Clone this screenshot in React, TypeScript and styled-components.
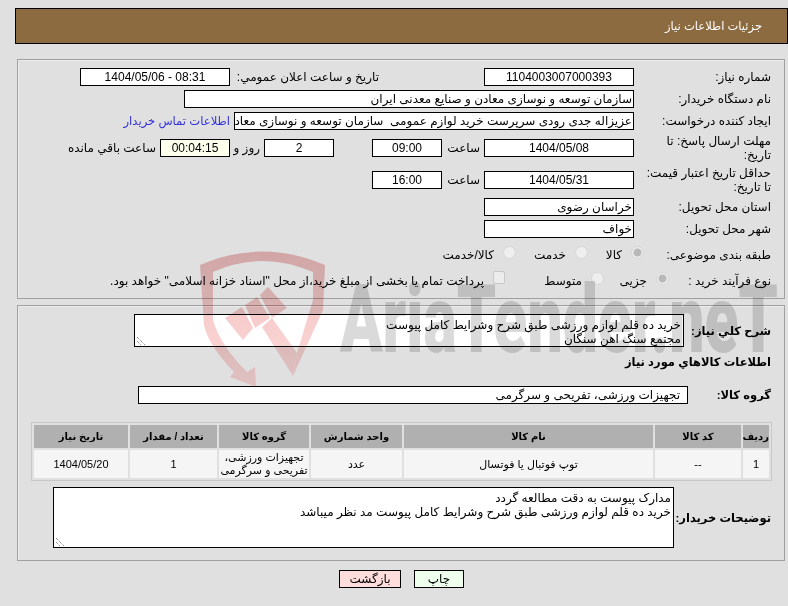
import styled, { createGlobalStyle } from 'styled-components';

const GlobalStyle = createGlobalStyle`
  html, body {
    margin: 0;
    padding: 0;
    background: #e0e0e0;
  }
  body {
    font-family: "Liberation Sans", "DejaVu Sans", sans-serif;
    font-size: 12px;
    color: #000;
  }
`;

const items = [
  ['1', '--', 'توپ فوتبال یا فوتسال', 'عدد', 'تجهیزات ورزشی، تفریحی و سرگرمی', '1', '1404/05/20'],
];

function ResizeGrip() {
  return (
    <Grip viewBox="0 0 9 9">
      <path d="M1 0 L9 8 M1 4 L5 8" stroke="#666" strokeDasharray="1 1" fill="none" />
    </Grip>
  );
}

export default function App() {
  return (
    <Page dir="rtl">
      <GlobalStyle />
      <Header>جزئیات اطلاعات نیاز</Header>

      <Panel>
        <Row>
          <Label>شماره نیاز:</Label>
          <Field $w={150} $center>1104003007000393</Field>
          <SubLabel>تاریخ و ساعت اعلان عمومي:</SubLabel>
          <Field $w={150} $center dir="ltr">1404/05/06 - 08:31</Field>
        </Row>
        <Row>
          <Label>نام دستگاه خریدار:</Label>
          <Field $w={450}>سازمان توسعه و نوسازی معادن و صنایع معدنی ایران</Field>
        </Row>
        <Row>
          <Label>ایجاد کننده درخواست:</Label>
          <Field $w={400}>عزیزاله جدی رودی سرپرست خرید لوازم عمومی  سازمان توسعه و نوسازی معادن و صنایع معدنی ایران</Field>
          <ContactLink>اطلاعات تماس خریدار</ContactLink>
        </Row>
        <TallRow>
          <Label>مهلت ارسال پاسخ: تا تاریخ:</Label>
          <Field $w={150} $center>1404/05/08</Field>
          <Unit $w={42}>ساعت</Unit>
          <Field $w={70} $center>09:00</Field>
          <Unit $w={38} />
          <Field $w={70} $center>2</Field>
          <Unit $w={34}>روز و</Unit>
          <Field $w={70} $center $bg="#ffffee">00:04:15</Field>
          <Unit>ساعت باقي مانده</Unit>
        </TallRow>
        <TallRow>
          <Label>حداقل تاریخ اعتبار قیمت: تا تاریخ:</Label>
          <Field $w={150} $center>1404/05/31</Field>
          <Unit $w={42}>ساعت</Unit>
          <Field $w={70} $center>16:00</Field>
        </TallRow>
        <Row>
          <Label>استان محل تحویل:</Label>
          <Field $w={150}>خراسان رضوی</Field>
        </Row>
        <Row>
          <Label>شهر محل تحویل:</Label>
          <Field $w={150}>خواف</Field>
        </Row>
        <ChoiceRow>
          <ChoiceLabel $w={127}>طبقه بندی موضوعی:</ChoiceLabel>
          <Radio $checked />
          <ChoiceText $w={34}>کالا</ChoiceText>
          <Radio />
          <ChoiceText $w={50}>خدمت</ChoiceText>
          <Radio />
          <ChoiceText>کالا/خدمت</ChoiceText>
        </ChoiceRow>
        <ProcessRow>
          <ChoiceLabel $w={102}>نوع فرآیند خرید :</ChoiceLabel>
          <Radio $checked />
          <ChoiceText $w={43}>جزیی</ChoiceText>
          <Radio />
          <ChoiceText $w={77}>متوسط</ChoiceText>
          <CheckBox />
          <ChoiceText>پرداخت تمام یا بخشی از مبلغ خرید،از محل "اسناد خزانه اسلامی" خواهد بود.</ChoiceText>
        </ProcessRow>
      </Panel>

      <Panel>
        <AreaRow>
          <BoldLabel $w={87}>شرح كلي نياز:</BoldLabel>
          <TextBox $w={550} $h={33}>
            خرید ده قلم لوازم ورزشی طبق شرح وشرایط کامل پیوست
            <br />
            مجتمع سنگ اهن سنگان
            <ResizeGrip />
          </TextBox>
        </AreaRow>
        <SectionTitle>اطلاعات كالاهاي مورد نياز</SectionTitle>
        <GroupRow>
          <BoldLabel $w={83}>گروه کالا:</BoldLabel>
          <Field $w={550} $pad={7}>تجهیزات ورزشی، تفریحی و سرگرمی</Field>
        </GroupRow>
        <ItemsTable>
          <colgroup>
            <col width={26} />
            <col width={86} />
            <col width={249} />
            <col width={91} />
            <col width={90} />
            <col width={87} />
            <col width={94} />
          </colgroup>
          <thead>
            <tr>
              <th>ردیف</th>
              <th>کد کالا</th>
              <th>نام کالا</th>
              <th>واحد شمارش</th>
              <th>گروه کالا</th>
              <th>تعداد / مقدار</th>
              <th>تاریخ نیاز</th>
            </tr>
          </thead>
          <tbody>
            {items.map((row) => (
              <tr key={row[0]}>
                {row.map((cell, i) => (
                  <td key={i}>{cell}</td>
                ))}
              </tr>
            ))}
          </tbody>
        </ItemsTable>
        <NotesRow>
          <BoldLabel $w={97}>توضیحات خریدار:</BoldLabel>
          <TextBox $w={621} $h={61}>
            مدارک پیوست به دقت مطالعه گردد
            <br />
            خرید ده قلم لوازم ورزشی طبق شرح وشرایط کامل پیوست مد نظر میباشد
            <ResizeGrip />
          </TextBox>
        </NotesRow>
      </Panel>

      <Buttons>
        <ActionButton $bg="#eeffee" $w={50}>چاپ</ActionButton>
        <ActionButton $bg="#ffdddd" $w={62}>بازگشت</ActionButton>
      </Buttons>

      <Watermark viewBox="0 0 788 606" aria-hidden="true">
        <defs>
          <linearGradient id="shieldFade" gradientUnits="userSpaceOnUse" x1="0" y1="250" x2="0" y2="386">
            <stop offset="0" stopColor="#eebcbc" />
            <stop offset="1" stopColor="#ffdcdc" />
          </linearGradient>
        </defs>
        <path
          d="M200 265 Q262 238 325 265 L323 310 L293 376 L297 353 L313 300 L313 272 Q262 250 213 272 L213 320 Q220 345 247 372 L255 367 L256 387 L230 377 L234 372 Q208 345 204 325 Z"
          fill="url(#shieldFade)"
        />
        <path d="M225 318 L242 307 L253 328 L243 340 Z" fill="url(#shieldFade)" />
        <path d="M245 305 L257 297 L270 318 L255 328 Z" fill="url(#shieldFade)" />
        <path d="M260 295 L268 287 L287 308 L272 318 Z" fill="url(#shieldFade)" />
        <path d="M272 318 L297 353 L293 376 L262 327 Z" fill="url(#shieldFade)" />
        <WatermarkText x="340" y="352" textLength="438" lengthAdjust="spacingAndGlyphs">
          AriaTender.neT
        </WatermarkText>
      </Watermark>
    </Page>
  );
}

const Page = styled.div`
  position: relative;
  width: 788px;
  height: 606px;
  overflow: hidden;
  padding-top: 8px;
  box-sizing: border-box;
`;

const Header = styled.div`
  box-sizing: border-box;
  height: 36px;
  margin-left: 15px;
  padding: 0 25px;
  display: flex;
  align-items: center;
  background: #8b6b3f;
  border: 1px solid #000;
  color: #fff;
  font-size: 11.5px;
`;

const Panel = styled.section`
  box-sizing: border-box;
  margin: 15px 3px 0 17px;
  padding: 8px 13px 6px 0;
  border: 1px solid #a0a0a0;
  box-shadow: inset 1px 1px 0 #ececec;
  & + & {
    margin-top: 6px;
    padding-bottom: 12px;
  }
`;

const Row = styled.div`
  display: flex;
  align-items: center;
  height: 18px;
  margin-bottom: 4px;
`;

const TallRow = styled(Row)`
  height: 28px;
`;

const ChoiceRow = styled(Row)`
  height: 24px;
  margin-bottom: 2px;
  padding-top: 2px;
  box-sizing: border-box;
`;

const ProcessRow = styled(ChoiceRow)`
  margin-bottom: 0;
`;

const AreaRow = styled(Row)`
  height: 33px;
  margin-bottom: 0;
`;

const GroupRow = styled(Row)`
  margin: 0;
`;

const NotesRow = styled(Row)`
  height: 61px;
  margin: 6px 0 0;
`;

const Label = styled.div`
  box-sizing: border-box;
  width: 137px;
  flex: none;
  padding-left: 12px;
  line-height: 14px;
`;

const ChoiceLabel = styled.div<{ $w: number }>`
  width: ${({ $w }) => $w}px;
  flex: none;
  white-space: nowrap;
`;

const BoldLabel = styled.div<{ $w: number }>`
  width: ${({ $w }) => $w}px;
  flex: none;
  font-size: 11.5px;
  font-weight: bold;
  white-space: nowrap;
`;

const SubLabel = styled.div`
  width: 145px;
  flex: none;
  margin: 0 105px 0 4px;
  white-space: nowrap;
`;

const Unit = styled.div<{ $w?: number }>`
  box-sizing: border-box;
  width: ${({ $w }) => ($w ? `${$w}px` : 'auto')};
  flex: none;
  padding: 0 4px;
  white-space: nowrap;
`;

const Field = styled.div<{ $w: number; $center?: boolean; $bg?: string; $pad?: number }>`
  box-sizing: border-box;
  width: ${({ $w }) => $w}px;
  height: 18px;
  flex: none;
  padding: 0 ${({ $pad }) => $pad ?? 1}px;
  line-height: 16px;
  overflow: hidden;
  white-space: pre;
  text-align: ${({ $center }) => ($center ? 'center' : 'right')};
  background: ${({ $bg }) => $bg ?? '#fff'};
  border: 1px solid #000;
`;

const ContactLink = styled.a`
  margin-right: 4px;
  color: #3333dd;
  font-size: 11.6px;
  white-space: nowrap;
`;

const Radio = styled.span<{ $checked?: boolean }>`
  box-sizing: border-box;
  width: 13px;
  height: 13px;
  margin: -6px 0 0 9px;
  flex: none;
  border-radius: 50%;
  border: 1px solid #d6d6d6;
  background: ${({ $checked }) => ($checked ? 'radial-gradient(circle, #b8b8b8 0 3.5px, #ececec 4.5px)' : '#eeeeee')};
`;

const CheckBox = styled.span`
  box-sizing: border-box;
  width: 12px;
  height: 13px;
  margin: -8px 0 0 9px;
  flex: none;
  border: 1px solid #c8c8c8;
  border-radius: 2px;
  background: #ececec;
`;

const ChoiceText = styled.span<{ $w?: number }>`
  width: ${({ $w }) => ($w ? `${$w}px` : 'auto')};
  flex: none;
  white-space: nowrap;
`;

const TextBox = styled.div<{ $w: number; $h: number }>`
  box-sizing: border-box;
  position: relative;
  width: ${({ $w }) => $w}px;
  height: ${({ $h }) => $h}px;
  flex: none;
  padding: 3px 2px 0;
  line-height: 14px;
  background: #fff;
  border: 1px solid #000;
`;

const Grip = styled.svg`
  position: absolute;
  left: 1px;
  bottom: 0;
  width: 9px;
  height: 9px;
`;

const SectionTitle = styled.div`
  margin: 8px 0 17px;
  font-size: 11.5px;
  line-height: 14px;
  font-weight: bold;
`;

const ItemsTable = styled.table`
  width: 741px;
  height: 59px;
  margin: 18px -1px 0 0;
  table-layout: fixed;
  border: 1px solid #c8c8c8;
  border-spacing: 2px;
  th {
    height: 23px;
    padding: 0;
    background: #b0b0b0;
    font-size: 10px;
    font-weight: bold;
  }
  td {
    height: 28px;
    padding: 0;
    background: #f5f5f5;
    font-size: 11px;
    text-align: center;
    line-height: 13px;
  }
`;

const Buttons = styled.div`
  display: flex;
  gap: 13px;
  margin-top: 9px;
  padding-right: 324px;
`;

const ActionButton = styled.button<{ $bg: string; $w: number }>`
  box-sizing: border-box;
  width: ${({ $w }) => $w}px;
  height: 18px;
  padding: 0;
  font: inherit;
  background: ${({ $bg }) => $bg};
  border: 1px solid #000;
`;

const Watermark = styled.svg`
  position: absolute;
  left: 0;
  top: 0;
  width: 788px;
  height: 606px;
  direction: ltr;
  pointer-events: none;
  mix-blend-mode: multiply;
`;

const WatermarkText = styled.text`
  direction: ltr;
  font-family: "Roboto", "Liberation Sans", sans-serif;
  font-size: 94px;
  font-weight: 900;
  fill: #dadada;
`;
